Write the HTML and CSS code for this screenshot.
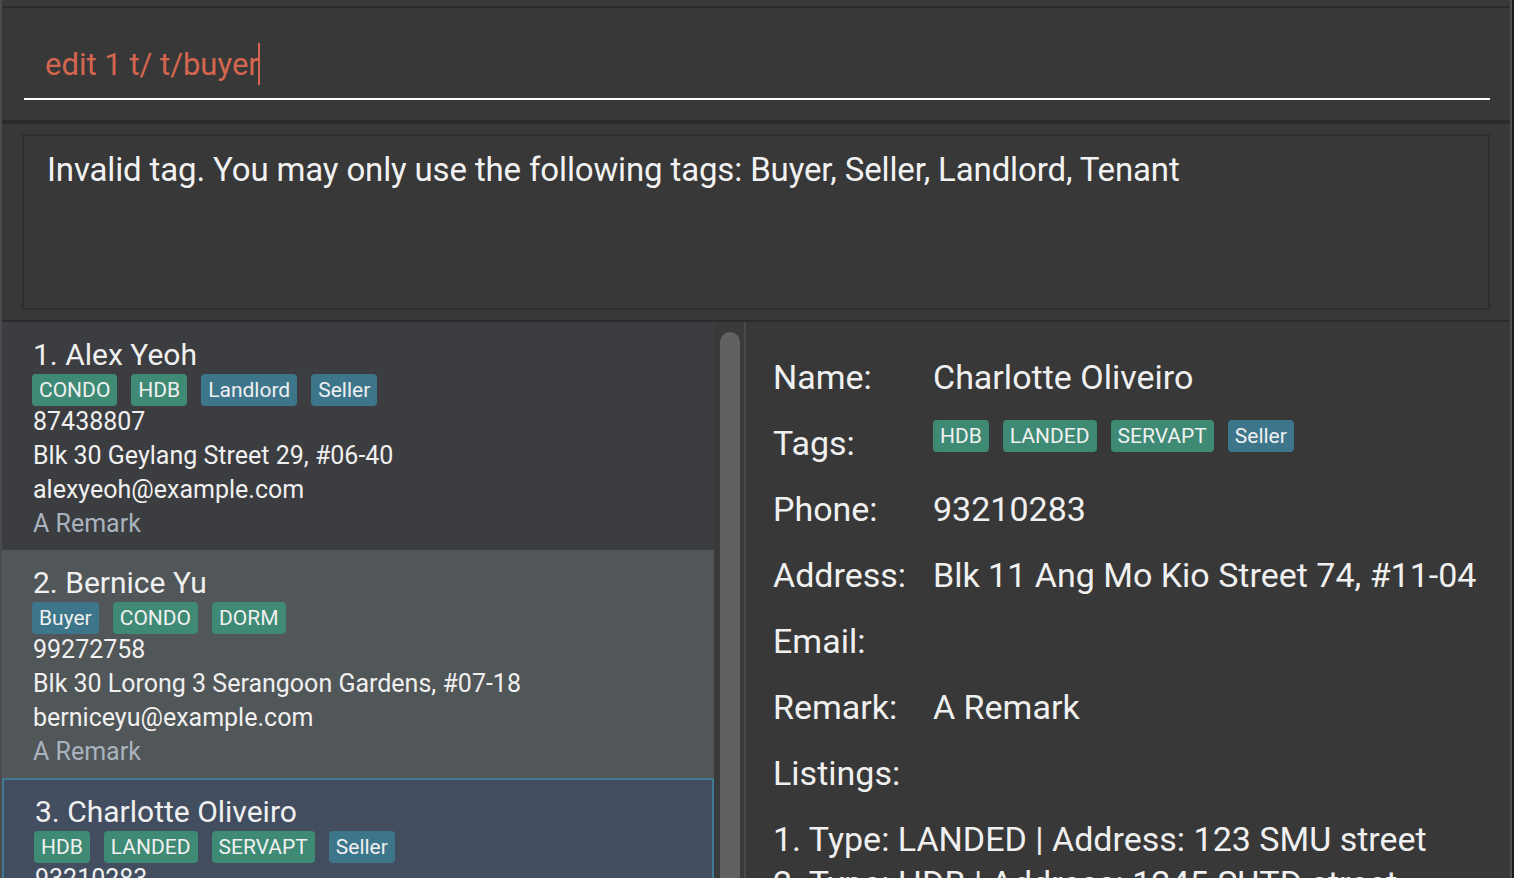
FILE: index.html
```html
<!DOCTYPE html>
<html>
<head>
<meta charset="utf-8">
<link rel="stylesheet" href="styles.css">
</head>
<body>
<div class="window">
  <div class="frame">
    <div class="topbar"></div>
    <div class="command">
      <div class="cmd-input"><span class="cmd-text">edit 1 t/ t/buyer</span><span class="caret"></span></div>
    </div>
    <div class="result">
      <div class="result-box">Invalid tag. You may only use the following tags: Buyer, Seller, Landlord, Tenant</div>
    </div>
    <div class="main">
      <div class="list">
        <div class="card card-plain">
          <div class="card-name">1. Alex Yeoh</div>
          <div class="tags">
            <span class="tag tag-type">CONDO</span><span class="tag tag-type">HDB</span><span class="tag tag-role">Landlord</span><span class="tag tag-role">Seller</span>
          </div>
          <div class="card-line">87438807</div>
          <div class="card-line">Blk 30 Geylang Street 29, #06-40</div>
          <div class="card-line">alexyeoh@example.com</div>
          <div class="card-line card-remark">A Remark</div>
        </div>
        <div class="card card-alt">
          <div class="card-name">2. Bernice Yu</div>
          <div class="tags">
            <span class="tag tag-role">Buyer</span><span class="tag tag-type">CONDO</span><span class="tag tag-type">DORM</span>
          </div>
          <div class="card-line">99272758</div>
          <div class="card-line">Blk 30 Lorong 3 Serangoon Gardens, #07-18</div>
          <div class="card-line">berniceyu@example.com</div>
          <div class="card-line card-remark">A Remark</div>
        </div>
        <div class="card card-selected">
          <div class="card-name">3. Charlotte Oliveiro</div>
          <div class="tags">
            <span class="tag tag-type">HDB</span><span class="tag tag-type">LANDED</span><span class="tag tag-type">SERVAPT</span><span class="tag tag-role">Seller</span>
          </div>
          <div class="card-line">93210283</div>
          <div class="card-line">Blk 11 Ang Mo Kio Street 74, #11-04</div>
        </div>
      </div>
      <div class="scroll"><div class="thumb"></div></div>
      <div class="detail">
        <div class="row"><span class="label">Name:</span><span class="value">Charlotte Oliveiro</span></div>
        <div class="row"><span class="label">Tags:</span>
          <span class="value tags detail-tags"><span class="tag tag-type">HDB</span><span class="tag tag-type">LANDED</span><span class="tag tag-type">SERVAPT</span><span class="tag tag-role">Seller</span></span>
        </div>
        <div class="row"><span class="label">Phone:</span><span class="value">93210283</span></div>
        <div class="row"><span class="label">Address:</span><span class="value">Blk 11 Ang Mo Kio Street 74, #11-04</span></div>
        <div class="row"><span class="label">Email:</span><span class="value"></span></div>
        <div class="row"><span class="label">Remark:</span><span class="value">A Remark</span></div>
        <div class="row"><span class="label">Listings:</span></div>
        <div class="listings">
          <div class="listing">1. Type: LANDED | Address: 123 SMU street</div>
          <div class="listing">2. Type: HDB | Address: 1245 SUTD street</div>
        </div>
      </div>
    </div>
  </div>
</div>
</body>
</html>
```
FILE: styles.css
```css
html, body {
  margin: 0;
  padding: 0;
}
body {
  width: 1514px;
  height: 878px;
  overflow: hidden;
  background: #383838;
  font-family: Roboto, "Liberation Sans", sans-serif;
  color: #eeeeee;
}
.window {
  width: 1514px;
  height: 878px;
  box-sizing: border-box;
  border-left: 2px solid #4b4b4b;
  border-right: 2px solid #1c1c1c;
}
.frame {
  height: 100%;
  border-right: 2px solid #4f4f4f;
  display: flex;
  flex-direction: column;
  background: #383838;
}
.topbar {
  height: 6px;
  flex: none;
  background: #3a3a3a;
  border-bottom: 2px solid #2b2b2b;
}
.command {
  flex: none;
  height: 116px;
  box-sizing: border-box;
  padding: 0 20px 0 22px;
  border-bottom: 4px solid #2c2c2c;
}
.cmd-input {
  display: flex;
  align-items: flex-start;
  height: 90px;
  padding-left: 21px;
  border-bottom: 2px solid #ffffff;
}
.cmd-text {
  font-size: 31px;
  color: #d4664f;
  line-height: 40px;
  margin-top: 37px;
}
.caret {
  width: 2px;
  height: 42px;
  background: #d4664f;
  margin-top: 35px;
  margin-left: -1px;
}
.result {
  flex: none;
  height: 198px;
  box-sizing: border-box;
  padding: 10px 20px;
  border-bottom: 2px solid #2c2c2c;
}
.result-box {
  height: 100%;
  box-sizing: border-box;
  border: 2px solid #2e2e2e;
  padding: 14px 23px;
  font-size: 33px;
  letter-spacing: -0.14px;
  line-height: 40px;
  color: #f2f2f2;
}
.main {
  flex: 1;
  display: flex;
  min-height: 0;
  overflow: hidden;
}
.list {
  width: 712px;
  flex: none;
  display: flex;
  flex-direction: column;
}
.card {
  flex: none;
  height: 228px;
  box-sizing: border-box;
  padding: 15px 10px 10px 31px;
}
.card-plain {
  background: #3c3d40;
}
.card-alt {
  background: #515658;
}
.card-selected {
  background: #424e60;
  border: 2px solid #3e7a94;
  padding: 14px 8px 10px 31px;
}
.card-name {
  font-size: 30px;
  line-height: 36px;
  color: #f0f0f0;
}
.tags {
  display: flex;
  gap: 14px;
  height: 32px;
}
.card .tags {
  margin-left: -1px;
  margin-top: 1px;
  margin-bottom: -1px;
}
.tag {
  display: inline-block;
  height: 32px;
  line-height: 32px;
  padding: 0 7px;
  border-radius: 4px;
  font-size: 21px;
  color: #f0f0f0;
}
.tag-type {
  background: #3e8a74;
}
.tag-role {
  background: #3d758b;
}
.card-line {
  font-size: 25px;
  line-height: 34px;
  color: #f0f0f0;
}
.card-remark {
  color: #a9b3bf;
}
.scroll {
  width: 32px;
  flex: none;
  box-sizing: border-box;
  padding: 10px 4px 0 6px;
  background: #3a3a3a;
  border-right: 2px solid #4a4a4a;
}
.thumb {
  width: 20px;
  height: 700px;
  border-radius: 10px;
  background: #616161;
}
.detail {
  flex: 1;
  padding: 22px 0 0 27px;
  display: flex;
  flex-direction: column;
}
.row {
  height: 66px;
  flex: none;
  display: flex;
  align-items: center;
  font-size: 34px;
  color: #f0f0f0;
  white-space: nowrap;
}
.label {
  width: 160px;
  flex: none;
}
.detail-tags {
  margin-bottom: 14px;
}
.listings {
  flex: none;
  margin-top: 11px;
  font-size: 34px;
  line-height: 44px;
  color: #f0f0f0;
  white-space: nowrap;
}
```
